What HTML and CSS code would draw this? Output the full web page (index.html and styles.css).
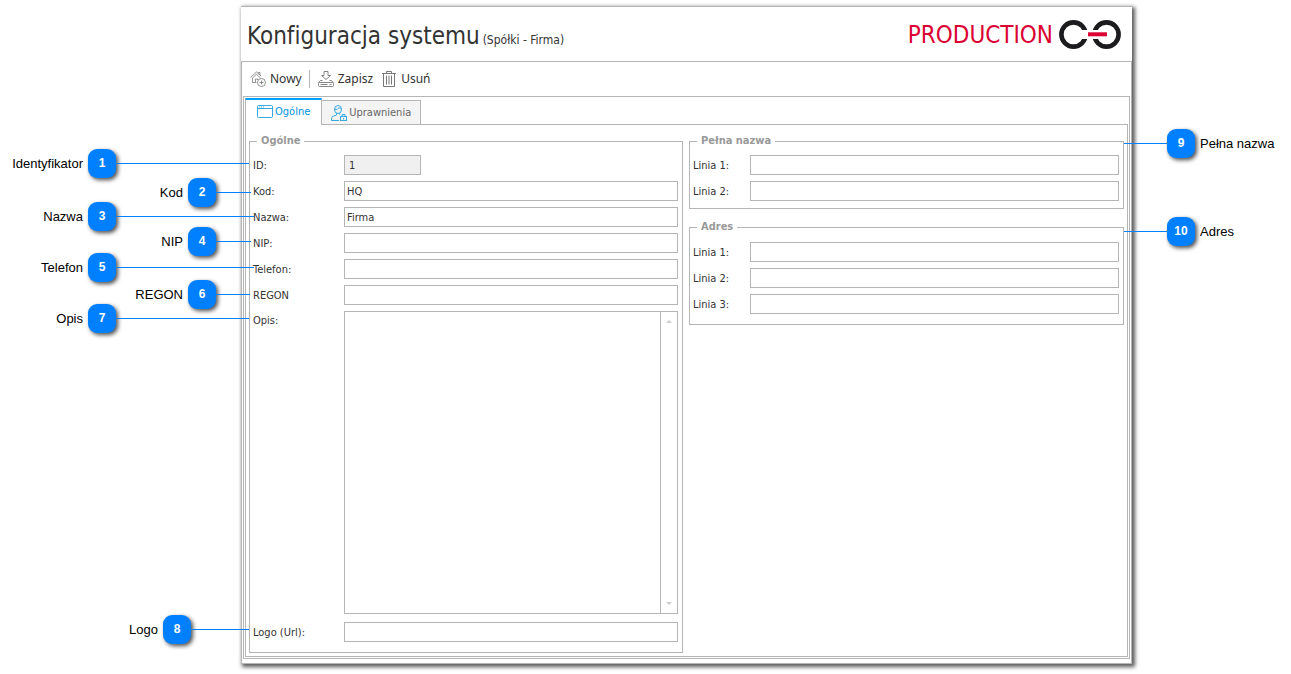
FILE: index.html
```html
<!DOCTYPE html>
<html lang="pl">
<head>
<meta charset="utf-8">
<title>Konfiguracja systemu</title>
<link rel="stylesheet" href="styles.css">
</head>
<body>
<div class="page">
  <main class="window">
    <header class="header">
      <div class="heading"><h1 class="title">Konfiguracja systemu</h1><span class="subtitle">(Spółki - Firma)</span></div>
      <div class="brand">
        <span>PRODUCTION</span>
        <svg class="brand-mark" viewBox="0 0 62 29" aria-hidden="true">
          <g fill="none" stroke="#1c1b1d" stroke-width="4.600"><circle cx="14.500" cy="14.500" r="12.100"/><circle cx="47.500" cy="14.500" r="12.100"/></g>
          <path fill="#fff" d="M20 10h22v9H20z"/>
          <path fill="#db0032" d="M29 12.300h19v4H29z"/>
        </svg>
      </div>
    </header>
    <div class="frame">
      <nav class="toolbar">
        <button class="tool" type="button">
          <svg class="tool-icon" viewBox="0 0 16 16" aria-hidden="true"><g fill="none" stroke="#777" stroke-width=".8"><path d="M.5 6.500 6.500 1l4.500 4M2 7.500 6.500 3.300 10.500 7M8.500 2.500V1.500H10V4M2.500 7.500v4h4"/><path d="M5.500 11V8h2v1"/><circle cx="11.500" cy="11.500" r="4"/><path d="M9.500 11.500h4M11.500 9.500v4"/></g></svg>
          Nowy
        </button>
        <span class="divider"></span>
        <button class="tool" type="button">
          <svg class="tool-icon" viewBox="0 0 16 16" aria-hidden="true"><g fill="none" stroke="#858585"><path d="M6 .5h4v4h2.500L8 8.500l-4.500-4H6z"/><rect x=".5" y="11.500" width="15" height="4" rx="1"/><path d="m.5 12 2-2.500h2M15.500 12l-2-2.500h-2M2.500 13.500h7M11.500 13.500h2"/></g></svg>
          Zapisz
        </button>
        <button class="tool tool-delete" type="button">
          <svg class="tool-icon" viewBox="0 0 16 16" aria-hidden="true"><g fill="none" stroke="#777"><path d="M1 2.500h14M5.500 2V.5h5V2M2.500 3v12.500h11V3M5.500 4.500v9M8 4.500v9M10.500 4.500v9"/></g></svg>
          Usuń
        </button>
      </nav>
      <div class="body">
        <div class="tabs" role="tablist">
          <button class="tab tab-active" type="button" role="tab" aria-selected="true">
            <svg class="tab-icon" viewBox="0 0 16 16" aria-hidden="true"><g fill="none" stroke="#36a9e1"><rect x=".5" y="1.500" width="15" height="12" rx="1"/><path d="M.5 4.500h15"/><path stroke-dasharray="1 1" d="M2 3h5"/></g></svg>
            Ogólne
          </button>
          <button class="tab" type="button" role="tab" aria-selected="false">
            <svg class="tab-icon" viewBox="0 0 16 16" aria-hidden="true"><g fill="none" stroke="#36a9e1"><ellipse cx="7" cy="4.500" rx="3.500" ry="4"/><path d="M3.500 4.500Q7 5 8 2.500q1 1.500 2.500 1.500M5.500 8v2l-4 1.500Q.5 12 .5 15.500H8M8.500 8v1.500"/><rect x="9.500" y="11.500" width="6" height="4"/><path d="M11 11.500V9.500h3v2M12.500 13v1.500"/></g></svg>
            Uprawnienia
          </button>
        </div>
        <div class="pane">
          <fieldset class="group">
            <legend>Ogólne</legend>
            <div class="fields">
              <label for="id">ID:</label><input class="short" id="id" value="1" readonly>
              <label for="code">Kod:</label><input id="code" value="HQ">
              <label for="name">Nazwa:</label><input id="name" value="Firma">
              <label for="nip">NIP:</label><input id="nip">
              <label for="phone">Telefon:</label><input id="phone">
              <label for="regon">REGON</label><input id="regon">
              <label class="label-top" for="note">Opis:</label>
              <div class="note">
                <textarea id="note"></textarea>
                <div class="scroll">
                  <svg viewBox="0 0 6 3" aria-hidden="true"><path fill="#ccc" d="M0 3 3 0l3 3z"/></svg>
                  <svg viewBox="0 0 6 3" aria-hidden="true"><path fill="#ccc" d="m0 0 3 3 3-3z"/></svg>
                </div>
              </div>
              <label for="logo">Logo (Url):</label><input id="logo">
            </div>
          </fieldset>
          <div class="side">
            <fieldset class="group">
              <legend>Pełna nazwa</legend>
              <div class="fields fields-narrow">
                <label for="n1">Linia 1:</label><input id="n1">
                <label for="n2">Linia 2:</label><input id="n2">
              </div>
            </fieldset>
            <fieldset class="group group-address">
              <legend>Adres</legend>
              <div class="fields fields-narrow">
                <label for="a1">Linia 1:</label><input id="a1">
                <label for="a2">Linia 2:</label><input id="a2">
                <label for="a3">Linia 3:</label><input id="a3">
              </div>
            </fieldset>
          </div>
        </div>
      </div>
    </div>
  </main>
  <div class="callout c1"><span>Identyfikator</span><b>1</b><i></i></div>
  <div class="callout c2"><span>Kod</span><b>2</b><i></i></div>
  <div class="callout c3"><span>Nazwa</span><b>3</b><i></i></div>
  <div class="callout c4"><span>NIP</span><b>4</b><i></i></div>
  <div class="callout c5"><span>Telefon</span><b>5</b><i></i></div>
  <div class="callout c6"><span>REGON</span><b>6</b><i></i></div>
  <div class="callout c7"><span>Opis</span><b>7</b><i></i></div>
  <div class="callout c8"><span>Logo</span><b>8</b><i></i></div>
  <div class="callout c9"><i></i><b>9</b><span>Pełna nazwa</span></div>
  <div class="callout c10"><i></i><b>10</b><span>Adres</span></div>
</div>
</body>
</html>
```
FILE: styles.css
```css
* { box-sizing: border-box; }
body { margin: 0; background: #fff; color: #333; font: 11px/14px "DejaVu Sans Condensed", "Noto Sans", sans-serif; font-variant-ligatures: none; }
button, input, textarea { font: inherit; color: inherit; margin: 0; border-radius: 0; }
.page { position: relative; padding: 6px 159px 10px 241px; }

.window { background: #fff; border-top: 1px solid #b5b5b5; box-shadow: 2px 2px 4px 1px rgba(0, 0, 0, .65); }
.header { display: flex; align-items: center; justify-content: space-between; height: 54px; padding: 0 11px 0 6px; }
.heading { display: flex; align-items: baseline; gap: 3px; padding-top: 3px; white-space: nowrap; }
.title { margin: 0; font-size: 24px; line-height: 32px; font-weight: 400; }
.subtitle { font-size: 12px; line-height: 16px; }
.brand { display: flex; align-items: center; gap: 6px; color: #db0032; font-size: 24px; line-height: 32px; }
.brand span { padding-top: 2px; }
.brand-mark { width: 62px; height: 29px; }
.frame { border: 1px solid #b5b5b5; padding: 0 1px 4px; }

.toolbar { display: flex; align-items: center; height: 34px; padding-left: 7px; }
.tool { display: flex; align-items: center; gap: 4px; padding: 0; border: 0; background: none; font: 12px/16px "Noto Sans", sans-serif; }
.tool-icon { width: 16px; height: 16px; }
.divider { width: 1px; height: 18px; margin: 0 8px 0 7px; background: #b5b5b5; }
.tool-delete { margin-left: 8px; }

.body { border: 1px solid #b5b5b5; padding: 1px; }
.tabs { display: flex; align-items: flex-end; height: 26px; }
.tab { display: flex; align-items: center; gap: 2px; height: 24px; padding: 0 9px; border: 1px solid #b5b5b5; border-left: 0; border-bottom: 0; background: #f4f4f4; color: #666; }
.tab-active { height: 26px; padding: 0 11px; border-left: 1px solid #b5b5b5; border-top: 2px solid #00a2ff; background: #fff; color: #0093dd; }
.tab-icon { width: 16px; height: 16px; }
.pane { display: grid; grid-template-columns: 434fr 435fr; gap: 6px; padding: 10px 3px 3px; border: 1px solid #b5b5b5; border-top: 0; background: linear-gradient(#b5b5b5, #b5b5b5) 75px 0 / 100% 1px no-repeat; }
.group { min-width: 0; margin: 0; padding: 7px 4px 10px 3px; border: 1px solid #b5b5b5; }
.group legend { margin-left: 4px; padding: 0 4px; color: #999; font-weight: 700; line-height: 14px; }
.fields { display: grid; grid-template-columns: 91px 1fr; row-gap: 6px; align-items: center; }
.fields label { padding-top: 2px; }
.fields-narrow { grid-template-columns: 57px 1fr; }
.fields input { width: 100%; height: 20px; padding: 0 2px; border: 1px solid #b5b5b5; background: #fff; }
.fields .short { width: 77px; padding-left: 4px; background: #f0f0f0; }
.fields .label-top { align-self: start; padding-top: 3px; }
.note { display: flex; height: 303px; margin-bottom: 2px; border: 1px solid #b5b5b5; }
.note textarea { flex: 1; min-width: 0; padding: 2px; border: 0; resize: none; overflow: hidden; }
.scroll { display: flex; flex-direction: column; justify-content: space-between; align-items: center; width: 17px; padding: 8px 0; border-left: 1px solid #b5b5b5; }
.scroll svg { width: 6px; height: 3px; }
.side .group { padding-bottom: 7px; }
.side .group-address { margin-top: 11px; padding: 8px 4px 10px 3px; }

.callout { position: absolute; display: flex; align-items: center; height: 29px; color: #000; font: 13px/18px "Liberation Sans", Arial, sans-serif; white-space: nowrap; }
.callout span { flex: 1; padding: 0 5px; text-align: right; }
.callout b { width: 28px; height: 29px; border-radius: 9px; background: #0080ff; color: #fff; font-size: 12px; line-height: 29px; text-align: center; box-shadow: 2px 2px 4px rgba(0, 0, 0, .7); }
.callout i { height: 1px; background: #0080ff; }
.c1, .c2, .c3, .c4, .c5, .c6, .c7, .c8 { left: 0; }
.c1 { top: 149px; width: 249px; }
.c2 { top: 178px; width: 251px; }
.c3 { top: 202px; width: 254px; }
.c4 { top: 227px; width: 251px; }
.c5 { top: 253px; width: 254px; }
.c6 { top: 280px; width: 250px; }
.c7 { top: 304px; width: 249px; }
.c8 { top: 615px; width: 249px; }
.c1 i, .c7 i { width: 133px; }
.c3 i, .c5 i { width: 138px; }
.c2 i, .c4 i { width: 35px; }
.c6 i { width: 34px; }
.c8 i { width: 58px; }
.c9, .c10 { right: 0; width: 167px; }
.c9 { top: 129px; }
.c10 { top: 217px; }
.c9 i, .c10 i { width: 43px; }
.c9 span, .c10 span { text-align: left; }
```
